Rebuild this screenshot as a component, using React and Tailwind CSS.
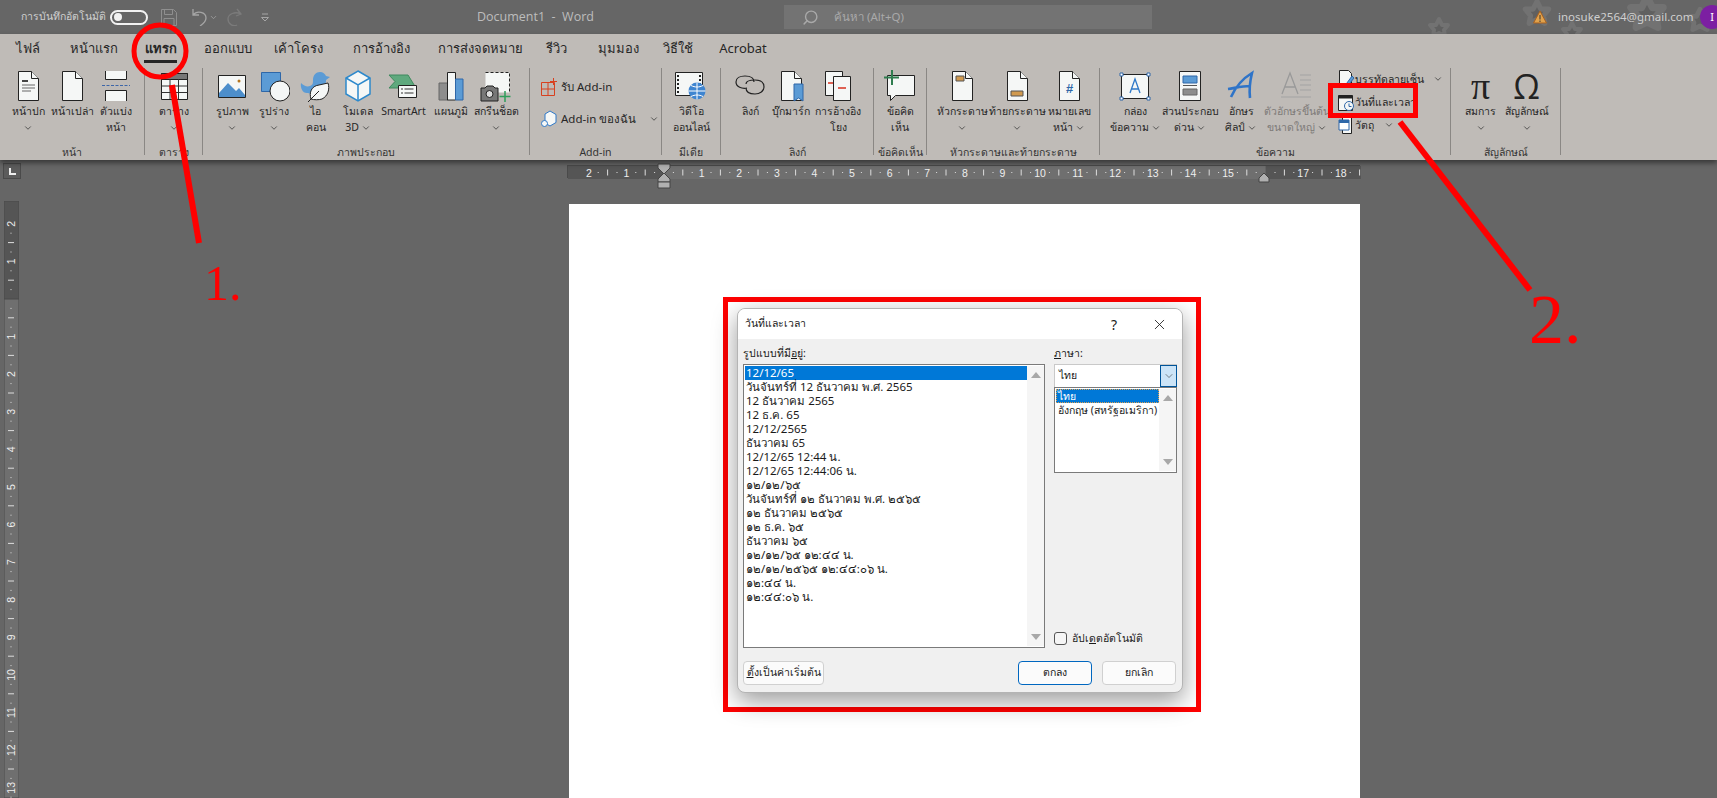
import React from 'react';
import { ChevronDown, Search, X } from 'lucide-react';

const Svg = ({ children, w = 32, h = 32, vb }) => (
  <svg width={w} height={h} viewBox={vb || `0 0 ${w} ${h}`} fill="none" className="shrink-0">
    {children}
  </svg>
);

const Sheet = ({ children }) => (
  <Svg>
    <path d="M6.500 1.500h13l7 7v22h-20z" fill="#f5f7f6" stroke="#222" />
    <path d="M19.500 1.500v7h7" fill="#f5f7f6" stroke="#222" />
    {children}
  </Svg>
);

const icons = {
  cover: (
    <Sheet>
      <path d="M10 10h6v2h-6z" fill="#444" />
      <path d="M10 15h13M10 18h13M10 21h9" stroke="#666" />
    </Sheet>
  ),
  blank: <Sheet />,
  pagebreak: (
    <Svg>
      <path d="M5.500 1v8.500h21V1M5.500 31v-10.500h21V31" fill="#f5f7f6" stroke="#222" />
      <path d="M2 15.500h28" stroke="#3d66a8" strokeDasharray="3 1.500" />
    </Svg>
  ),
  table: (
    <Svg>
      <path d="M3.500 3.500h26v26h-26z" fill="#f5f7f6" stroke="#222" />
      <path d="M3.500 3.500h26v6h-26z" fill="#777" stroke="#222" />
      <path d="M12 9v20M20.500 9v20M3.500 16h26M3.500 22.500h26" stroke="#333" />
    </Svg>
  ),
  picture: (
    <Svg>
      <path d="M2.500 5.500h27v22h-27z" fill="#f5f7f6" stroke="#222" />
      <path d="M3 27V23l9-10 8 8 3-3 6 7v2z" fill="#4d8ecb" />
      <circle cx="23" cy="11" r="1.500" fill="#b5751f" />
    </Svg>
  ),
  shape: (
    <Svg>
      <path d="M3.500 2.500h19v19h-19z" fill="#5b9bd5" stroke="#2e67a8" />
      <circle cx="22" cy="21" r="10" fill="#f5f7f6" stroke="#222" />
    </Svg>
  ),
  icon3: (
    <Svg>
      <path d="M1 13c3 3 6 4 9 3 3-1 3-3 3-6 0-5 3-8 7-8 3 0 5 2 6 4l4 1-4 3c0 4-1 8-5 11-4 3-9 4-13 2C3 24 0 18 1 13z" fill="#5b9bd5" />
      <path d="M11 29c-2-6 0-13 8-14l9-2c2 6 0 13-6 16-3 1-8 1-11 0z" fill="#f5f7f6" stroke="#222" />
      <path d="M8 32l11-11" stroke="#222" />
    </Svg>
  ),
  model: (
    <Svg>
      <path d="M16 1l12 7v16l-12 7-12-7V8z" fill="#f5f7f6" stroke="#2d89cc" strokeWidth="1.500" />
      <path d="M4 8l12 7 12-7M16 15v16" stroke="#2d89cc" strokeWidth="1.500" />
    </Svg>
  ),
  smartart: (
    <Svg w={34} h={32}>
      <path d="M2 5h19l8 13H2l6-6.500z" fill="#5fa97e" stroke="#3f8a5e" />
      <path d="M11.500 15.500h18v12h-18z" fill="#f5f7f6" stroke="#222" />
      <path d="M14 19h2M17.500 19h9M14 23h2M17.500 23h9" stroke="#333" />
    </Svg>
  ),
  chart: (
    <Svg>
      <path d="M4 13h9v17h-9z" fill="#8d8d8d" stroke="#666" />
      <path d="M12.500 2.500h8v27.500h-8z" fill="#f5f7f6" stroke="#222" />
      <path d="M20.500 9h7.500v21h-7.500z" fill="#5b9bd5" stroke="#2e67a8" />
    </Svg>
  ),
  screenshot: (
    <Svg>
      <path d="M5.500 2.500h24v20h-24z" fill="#f5f7f6" />
      <path d="M5.500 2.500h24v20" stroke="#222" strokeDasharray="3 2" />
      <path d="M1 18h4l2-2h6l2 2h3v13h-17z" fill="#777" stroke="#222" />
      <circle cx="9.500" cy="24" r="3.500" fill="#ddd" stroke="#222" />
      <path d="M25 21v11M19.500 26.500h11" stroke="#2f9e5b" strokeWidth="1.500" />
    </Svg>
  ),
  video: (
    <Svg w={34} h={32}>
      <path d="M1.500 2.500h27v23h-27z" fill="#f5f7f6" stroke="#222" />
      <path d="M4 5v18M26 5v18" stroke="#222" strokeWidth="2" strokeDasharray="2 2" />
      <circle cx="23" cy="21" r="8.500" fill="#3f85d0" />
      <path d="M23 12.500v17M14.500 21h17M17 15.500c4 2 8 2 12 0M17 26.500c4-2 8-2 12 0" stroke="#fff" />
    </Svg>
  ),
  link: (
    <Svg>
      <path d="M13 18c-5 1-11-1-11-6 0-4 4-6 9-6 6 0 9 2 9 6" stroke="#222" strokeWidth="1.200" />
      <path d="M12 14c0-3 4-4 9-4 6 0 9 3 9 7s-4 7-9 7c-6 0-9-2-9-6" stroke="#222" strokeWidth="1.200" />
    </Svg>
  ),
  bookmark: (
    <Sheet>
      <path d="M19 14h9v17l-4.500-3-4.500 3z" fill="#5b9bd5" stroke="#2e67a8" />
    </Sheet>
  ),
  crossref: (
    <Svg>
      <path d="M3.500 1.500h17v24h-17z" fill="#f5f7f6" stroke="#222" />
      <path d="M11.500 6.500h17v24h-17z" fill="#f5f7f6" stroke="#222" />
      <path d="M6 13h5M16 18h8" stroke="#d8321f" strokeWidth="1.300" />
    </Svg>
  ),
  comment: (
    <Svg>
      <path d="M3.500 5.500h27v20h-19l-5 5v-5h-3z" fill="#f5f7f6" stroke="#222" />
      <path d="M8 0v15M0 7.500h15" stroke="#2f7d4f" strokeWidth="2" />
    </Svg>
  ),
  header: (
    <Sheet>
      <path d="M10 6h8v5h-8z" fill="#d19a4f" stroke="#555" />
    </Sheet>
  ),
  footer: (
    <Sheet>
      <path d="M10 21h12v5h-12z" fill="#d19a4f" stroke="#555" />
    </Sheet>
  ),
  pagenum: (
    <Sheet>
      <text x="16.500" y="23" textAnchor="middle" fontSize="13" fontWeight="700" fill="#2e67a8" fontFamily="Liberation Sans">#</text>
    </Sheet>
  ),
  textbox: (
    <Svg>
      <path d="M2.500 4.500h27v24h-27z" fill="#f5f7f6" stroke="#222" />
      <path d="M1 3h3v3h-3zM28 3h3v3h-3zM1 27h3v3h-3zM28 27h3v3h-3z" fill="#fff" stroke="#2e67a8" />
      <path d="M11 23l5-14 5 14M12.500 19h7" stroke="#2e78c8" strokeWidth="1.300" />
    </Svg>
  ),
  quickparts: (
    <Svg>
      <path d="M5.500 1.500h21v29h-21z" fill="#f5f7f6" stroke="#222" />
      <path d="M9 6h14v7h-14z" fill="#5b9bd5" stroke="#2e67a8" />
      <path d="M9 15.500h14" stroke="#555" />
      <path d="M9 19h14v6h-14z" fill="#8d8d8d" stroke="#666" />
    </Svg>
  ),
  wordart: (
    <Svg>
      <path d="M3 19c7-1 14-3 22-3M6 27C10 18 17 9 27 3c-2 8-3 16-2 25" stroke="#2f74c8" strokeWidth="2.600" />
    </Svg>
  ),
  dropcap: (
    <Svg w={34} h={32}>
      <path d="M2 24l8-21 8 21M5 17h10" stroke="#999" strokeWidth="1.300" />
      <path d="M20 5h11M20 10h11M20 15h11M20 20h11M1 27h30" stroke="#a3a3a3" />
    </Svg>
  ),
};

const Chev = ({ className = '' }) => <ChevronDown size={10} strokeWidth={1.800} className={`inline-block text-[#333] ${className}`} />;

// one big ribbon button, icon on top and up to two lines of label
const Item = ({ w, icon, lines, chevron, muted }) => (
  <div className={`flex flex-col items-center shrink-0 ${w} ${muted ? 'text-[#7d7a78]' : 'text-[#262626]'}`}>
    <div className="h-[32px] mt-[2px] flex items-center justify-center">{icon}</div>
    <div className="leading-[16px] text-[10.5px] whitespace-nowrap text-center pt-[1px]">
      {lines.map((l, i) => (
        <div key={i} className="h-[16px]">
          {l}
          {chevron === 'inline' && i === lines.length - 1 && <Chev className="ml-[2px]" />}
        </div>
      ))}
      {chevron === 'below' && (
        <div className="h-[16px]">
          <Chev />
        </div>
      )}
    </div>
  </div>
);

const Group = ({ w, label, children, className = '' }) => (
  <div className={`shrink-0 h-[87px] border-r border-[#8a8784] flex flex-col ${w}`}>
    <div className={`flex flex-1 min-h-0 ${className}`}>{children}</div>
    <div className="h-[10px] text-center text-[10.5px] leading-[15px] text-[#333] whitespace-nowrap">{label}</div>
  </div>
);

const tabs = [
  ['ไฟล์', 'w-[55px]'],
  ['หน้าแรก', 'w-[78px]'],
  ['แทรก', 'w-[55px]'],
  ['ออกแบบ', 'w-[80px]'],
  ['เค้าโครง', 'w-[60px]'],
  ['การอ้างอิง', 'w-[106px]'],
  ['การส่งจดหมาย', 'w-[92px]'],
  ['รีวิว', 'w-[60px]'],
  ['มุมมอง', 'w-[64px]'],
  ['วิธีใช้', 'w-[56px]'],
  ['Acrobat', 'w-[74px]'],
];

const Ribbon = () => (
  <div className="h-[126px] bg-[#bfbbb7] shadow-[0_3px_5px_rgba(0,0,0,0.45)] relative z-10">
    <div className="h-[34px] flex items-center pb-[4px] text-[13px] text-[#262626]">
      {tabs.map(([t, w]) => (
        <div key={t} className={`${w} shrink-0 text-center whitespace-nowrap relative ${t === 'แทรก' ? 'font-bold' : ''}`}>
          {t}
          {t === 'แทรก' && <div className="absolute left-[11px] right-[11px] top-[21px] h-[3px] bg-[#262626]" />}
        </div>
      ))}
    </div>
    <div className="flex h-[87px]">
      <Group w="w-[145px]" label="หน้า" className="pl-[6px]">
        <Item w="w-[44px]" icon={icons.cover} lines={['หน้าปก']} chevron="below" />
        <Item w="w-[44px]" icon={icons.blank} lines={['หน้าเปล่า']} />
        <Item w="w-[44px]" icon={icons.pagebreak} lines={['ตัวแบ่ง', 'หน้า']} />
      </Group>
      <Group w="w-[58px]" label="ตาราง" className="justify-center">
        <Item w="w-[50px]" icon={icons.table} lines={['ตาราง']} chevron="below" />
      </Group>
      <Group w="w-[327px]" label="ภาพประกอบ" className="pl-[8px]">
        <Item w="w-[42px]" icon={icons.picture} lines={['รูปภาพ']} chevron="below" />
        <Item w="w-[41px]" icon={icons.shape} lines={['รูปร่าง']} chevron="below" />
        <Item w="w-[43px]" icon={icons.icon3} lines={['ไอ', 'คอน']} />
        <Item w="w-[42px]" icon={icons.model} lines={['โมเดล', '3D']} chevron="inline" />
        <Item w="w-[49px]" icon={icons.smartart} lines={['SmartArt']} />
        <Item w="w-[46px]" icon={icons.chart} lines={['แผนภูมิ']} />
        <Item w="w-[44px]" icon={icons.screenshot} lines={['สกรีนช็อต']} chevron="below" />
      </Group>
      <Group w="w-[132px]" label="Add-in" className="flex-col pl-[11px] text-[11.5px] text-[#262626] whitespace-nowrap">
        <div className="h-[32px] mt-[3px] flex items-center gap-[4px]">
          <Svg w={16} h={18}>
            <path d="M.5 4.500h13v13h-13zM7 4.500v13M.5 11h13" stroke="#d8401f" />
            <path d="M12.500 0v7M9 3.500h7" stroke="#d8401f" />
          </Svg>
          รับ Add-in
        </div>
        <div className="h-[32px] flex items-center gap-[4px]">
          <Svg w={16} h={18}>
            <path d="M9 1l6 3.500v8l-6 3.500-5-3v-9z" fill="#f5f7f6" stroke="#2e78c8" />
            <circle cx="3.500" cy="13.500" r="3" fill="#f5f7f6" stroke="#2e78c8" />
          </Svg>
          Add-in ของฉัน
          <Chev className="ml-[9px]" />
        </div>
      </Group>
      <Group w="w-[59px]" label="มีเดีย" className="justify-center">
        <Item w="w-[50px]" icon={icons.video} lines={['วิดีโอ', 'ออนไลน์']} />
      </Group>
      <Group w="w-[153px]" label="ลิงก์" className="pl-[8px]">
        <Item w="w-[42px]" icon={icons.link} lines={['ลิงก์']} />
        <Item w="w-[40px]" icon={icons.bookmark} lines={['บุ๊กมาร์ก']} />
        <Item w="w-[54px]" icon={icons.crossref} lines={['การอ้างอิง', 'โยง']} />
      </Group>
      <Group w="w-[53px]" label="ข้อคิดเห็น" className="justify-center">
        <Item w="w-[44px]" icon={icons.comment} lines={['ข้อคิด', 'เห็น']} />
      </Group>
      <Group w="w-[173px]" label="หัวกระดาษและท้ายกระดาษ" className="pl-[7px]">
        <Item w="w-[56px]" icon={icons.header} lines={['หัวกระดาษ']} chevron="below" />
        <Item w="w-[54px]" icon={icons.footer} lines={['ท้ายกระดาษ']} chevron="below" />
        <Item w="w-[50px]" icon={icons.pagenum} lines={['หมายเลข', 'หน้า']} chevron="inline" />
      </Group>
      <Group w="w-[351px]" label="ข้อความ" className="pl-[8px]">
        <Item w="w-[54px]" icon={icons.textbox} lines={['กล่อง', 'ข้อความ']} chevron="inline" />
        <Item w="w-[56px]" icon={icons.quickparts} lines={['ส่วนประกอบ', 'ด่วน']} chevron="inline" />
        <Item w="w-[46px]" icon={icons.wordart} lines={['อักษร', 'ศิลป์']} chevron="inline" />
        <Item w="w-[66px]" muted icon={icons.dropcap} lines={['ตัวอักษรขึ้นต้น', 'ขนาดใหญ่']} chevron="inline" />
        <div className="ml-[8px] flex flex-col text-[10.5px] leading-[16px] text-[#262626] whitespace-nowrap">
          <div className="h-[22px] flex items-center">
            <Svg w={17} h={18}>
              <path d="M1.500.5h9l3 3v14h-12z" fill="#f5f7f6" stroke="#222" />
              <path d="M6 17l8-11 2 2-8 10z" fill="#5b9bd5" stroke="#2e67a8" />
            </Svg>
            บรรทัดลายเซ็น
            <Chev className="ml-[9px]" />
          </div>
          <div className="h-[23px] flex items-center">
            <Svg w={17} h={18}>
              <path d="M.5 2.500h14v15h-14z" fill="#f5f7f6" stroke="#222" />
              <path d="M.5 2.500h14v3h-14z" fill="#222" />
              <circle cx="11" cy="13" r="4.500" fill="#f5f7f6" stroke="#2e67a8" />
              <path d="M11 10.500v3h2.500" stroke="#2e67a8" />
            </Svg>
            วันที่และเวลา
          </div>
          <div className="h-[23px] flex items-center">
            <Svg w={17} h={18}>
              <path d="M4.500.5h9v17h-9z" fill="#f5f7f6" stroke="#222" />
              <path d="M1 4h10v10h-10z" fill="#fff" stroke="#2e67a8" />
              <path d="M1 4h10v3h-10z" fill="#2e67a8" />
            </Svg>
            วัตถุ
            <Chev className="ml-[10px]" />
          </div>
        </div>
      </Group>
      <Group w="w-[110px]" label="สัญลักษณ์" className="pl-[7px]">
        <Item
          w="w-[45px]"
          icon={
            <span className="text-[38px] leading-[32px] font-['Liberation_Serif',serif] text-[#222]">π</span>
          }
          lines={['สมการ']}
          chevron="below"
        />
        <Item
          w="w-[47px]"
          icon={
            <span className="text-[34px] leading-[32px] font-['Open_Sans',sans-serif] text-[#222]">Ω</span>
          }
          lines={['สัญลักษณ์']}
          chevron="below"
        />
      </Group>
    </div>
  </div>
);

// faint office theme stars behind the account name
const starPath = 'M0 -9L3 -3L9 -3L5 2L6 8L0 5L-6 8L-5 2L-9 -3L-3 -3Z';

const TitleBar = () => (
  <div className="h-[34px] bg-[#666666] flex items-center text-[#d0d0d0] relative overflow-hidden">
    <svg width="337" height="34" viewBox="0 0 337 34" fill="none" className="absolute right-0 top-0">
      {[[59, 28, 1], [157, 13, 1.300], [192, 32, 1], [267, 13, 1.800], [320, 20, 1.200]].map(([x, y, s]) => (
        <path key={x} d={starPath} transform={`translate(${x} ${y}) scale(${s})`} fill="#606060" stroke="#727272" strokeWidth="4" strokeLinejoin="round" />
      ))}
    </svg>
    <div className="w-[110px] shrink-0 pl-[21px] text-[10.5px] whitespace-nowrap">การบันทึกอัตโนมัติ</div>
    <div className="w-[38px] h-[15px] shrink-0 rounded-full border-2 border-[#f2f2f2] flex items-center pl-[2px]">
      <div className="w-[8px] h-[8px] rounded-full bg-[#f2f2f2]" />
    </div>
    <div className="ml-[13px] shrink-0">
      <Svg w={16} h={18}>
        <path d="M.5 1.500h12l3 3v13h-15z M3.500 1.500v5h8v-5M3 17.500v-7h10v7" stroke="#8f8f8f" />
      </Svg>
    </div>
    <div className="ml-[13px] flex items-center shrink-0">
      <Svg w={18} h={18}>
        <path d="M3 1v6h6M3 7c4-5 13-3 13 3 0 4-3 6-6 8" stroke="#a5a5a5" strokeWidth="1.300" />
      </Svg>
      <ChevronDown size={9} className="text-[#a5a5a5] ml-[1px]" />
    </div>
    <div className="ml-[8px] shrink-0">
      <Svg w={18} h={18}>
        <path d="M11 1l4 5-5 2M15 6c-6-3-13 0-13 5 0 5 5 8 9 6" stroke="#7b7b7b" strokeWidth="1.300" />
      </Svg>
    </div>
    <div className="ml-[16px] shrink-0">
      <Svg w={10} h={12}>
        <path d="M2 3h6M1.500 6.500h7l-3.500 3.500z" stroke="#a5a5a5" />
      </Svg>
    </div>
    <div className="ml-[207px] w-[130px] shrink-0 text-[12.5px] text-[#bdbdbd] whitespace-pre font-['Open_Sans',sans-serif]">Document1  -  Word</div>
    <div className="ml-[177px] w-[368px] h-[24px] shrink-0 bg-[#737373] flex items-center pl-[18px] text-[11.5px] text-[#a9a9a9]">
      <Search size={17} className="-scale-x-100 text-[#a9a9a9] mr-[15px]" />
      ค้นหา (Alt+Q)
    </div>
    <div className="ml-[381px] flex items-center relative shrink-0">
      <Svg w={14} h={14}>
        <path d="M7 1l6.500 12H.5z" fill="#e0a24d" stroke="#a8601f" />
        <path d="M7 5v4.500M7 10.500v1.500" stroke="#333" />
      </Svg>
      <span className="ml-[11px] w-[131px] text-[11.5px] text-[#cfcfcf] whitespace-nowrap">inosuke2564@gmail.com</span>
      <div className="ml-[11px] w-[24px] h-[24px] shrink-0 bg-[#7c1fa2] rounded-full text-[11px] text-white flex items-center justify-center">I</div>
    </div>
  </div>
);

// ruler is a drawing, ticks and numbers are generated per centimetre
const HRuler = () => {
  const cm = 37.6;
  const zero = 96;
  const marks = [];
  for (let i = -2; i <= 18; i++) {
    const x = zero + i * cm;
    if (i !== 0 && i !== 16) marks.push(<text key={`n${i}`} x={x} y="10.500" textAnchor="middle" fontSize="10.500" fill="#eee" fontFamily="Liberation Sans">{Math.abs(i)}</text>);
    marks.push(<path key={`h${i}`} d={`M${x + cm / 2} 3.500v6`} stroke="#ddd" />);
    marks.push(<path key={`a${i}`} d={`M${x + cm / 4} 6v1M${x + (3 * cm) / 4} 6v1`} stroke="#ddd" />);
  }
  return (
    <div className="relative w-[793px] h-[13px] border border-[#4a4a4a]">
      <svg width="793" height="13" viewBox="0 0 793 13" className="block">
        <rect width="793" height="13" fill="#555" />
        <rect x="96" width="601.600" height="13" fill="#6f6f6f" />
        {marks}
      </svg>
      <svg width="14" height="26" viewBox="0 0 14 26" className="absolute left-[89px] -top-[3px]">
        <path d="M1 1h12v4l-6 6-6-6z" fill="#b0b0b0" stroke="#444" />
        <path d="M7 10l6 6v3h-12v-3z" fill="#b0b0b0" stroke="#444" />
        <path d="M1 19h12v6h-12z" fill="#b0b0b0" stroke="#444" />
      </svg>
      <svg width="12" height="10" viewBox="0 0 12 10" className="absolute left-[690px] top-[7px]">
        <path d="M6 0l5 5v4h-10v-4z" fill="#b0b0b0" stroke="#444" />
      </svg>
    </div>
  );
};

const VRuler = () => {
  const cm = 37.6;
  const zero = 98;
  const marks = [];
  for (let i = -2; i <= 13; i++) {
    const y = zero + i * cm;
    if (i !== 0) marks.push(<text key={`n${i}`} x="0" y="0" transform={`translate(11 ${y}) rotate(-90)`} textAnchor="middle" fontSize="10.500" fill="#eee" fontFamily="Liberation Sans">{Math.abs(i)}</text>);
    marks.push(<path key={`h${i}`} d={`M4 ${y + cm / 2}h6`} stroke="#ddd" />);
    marks.push(<path key={`a${i}`} d={`M6.500 ${y + cm / 4}h1M6.500 ${y + (3 * cm) / 4}h1`} stroke="#ddd" />);
  }
  return (
    <svg width="15" height="597" viewBox="0 0 15 597" className="block ml-[1px] mt-[22px]">
      <rect width="15" height="597" fill="#6f6f6f" stroke="#4a4a4a" />
      <rect width="15" height="98" fill="#555" stroke="#4a4a4a" />
      {marks}
    </svg>
  );
};

const formats = [
  '12/12/65',
  'วันจันทร์ที่ 12 ธันวาคม พ.ศ. 2565',
  '12 ธันวาคม 2565',
  '12 ธ.ค. 65',
  '12/12/2565',
  'ธันวาคม 65',
  '12/12/65 12:44 น.',
  '12/12/65 12:44:06 น.',
  '๑๒/๑๒/๖๕',
  'วันจันทร์ที่ ๑๒ ธันวาคม พ.ศ. ๒๕๖๕',
  '๑๒ ธันวาคม ๒๕๖๕',
  '๑๒ ธ.ค. ๖๕',
  'ธันวาคม ๖๕',
  '๑๒/๑๒/๖๕ ๑๒:๔๔ น.',
  '๑๒/๑๒/๒๕๖๕ ๑๒:๔๔:๐๖ น.',
  '๑๒:๔๔ น.',
  '๑๒:๔๔:๐๖ น.',
];

const ScrollBar = () => (
  <div className="w-[17px] bg-[#f5f5f5] flex flex-col justify-between items-center py-[6px] shrink-0">
    <div className="w-0 h-0 border-x-[5px] border-x-transparent border-b-[6px] border-b-[#a8a8a8]" />
    <div className="w-0 h-0 border-x-[5px] border-x-transparent border-t-[6px] border-t-[#a8a8a8]" />
  </div>
);

const DateDialog = () => (
  <div className="w-[478px] h-[415px] border-[5px] border-[#ff0000] ml-[154px] mt-[93px] pl-[9px] pt-[6px]">
    <div className="w-[446px] h-[385px] rounded-[8px] overflow-hidden border border-[#b4b4b4] shadow-[0_8px_24px_rgba(0,0,0,0.4)] bg-[#f0f0f0] text-[10.5px] text-[#1a1a1a]">
      <div className="h-[30px] bg-white flex items-center pl-[7px] text-[10.5px]">
        <span>วันที่และเวลา</span>
        <span className="ml-auto text-[14px] mr-[34px]">?</span>
        <X size={17} strokeWidth={1.200} className="mr-[14px]" />
      </div>
      <div className="px-[5px]">
        <div className="flex">
          <div className="w-[302px]">
            <div className="h-[25px] flex items-end pb-[2px]">
              <span>รูปแบบที่มี<u>อ</u>ยู่:</span>
            </div>
            <div className="h-[284px] border border-[#7a7a7a] bg-white flex p-[1px] pr-0">
              <div className="flex-1 min-w-0 leading-[14px] text-[11.5px]">
                {formats.map((f, i) => (
                  <div key={f} className={`h-[14px] pl-[1px] whitespace-nowrap ${i === 0 ? 'bg-[#0078d7] text-white' : ''}`}>{f}</div>
                ))}
              </div>
              <ScrollBar />
            </div>
          </div>
          <div className="w-[123px] ml-[9px] flex flex-col">
            <div className="h-[25px] flex items-end pb-[2px]">
              <span><u>ภ</u>าษา:</span>
            </div>
            <div className="h-[23px] bg-white flex items-center pl-[4px] border-t border-l border-[#c9c9c9]">
              <span>ไทย</span>
              <div className="ml-auto w-[17px] h-[22px] bg-[#cce4f7] border border-[#005499] flex items-center justify-center">
                <ChevronDown size={12} strokeWidth={1} />
              </div>
            </div>
            <div className="h-[86px] border border-[#7a7a7a] bg-white flex p-[1px] pr-0 leading-[14px]">
              <div className="flex-1 min-w-0">
                <div className="h-[14px] bg-[#0078d7] text-white pl-[2px] outline-dotted outline-1 -outline-offset-1 outline-[#e0a050]">ไทย</div>
                <div className="h-[14px] pl-[2px] whitespace-nowrap">อังกฤษ (สหรัฐอเมริกา)</div>
              </div>
              <ScrollBar />
            </div>
            <div className="mt-[159px] flex items-center h-[13px]">
              <div className="w-[13px] h-[13px] rounded-[3px] border border-[#555] bg-[#f5f5f5]" />
              <span className="ml-[5px] whitespace-nowrap">อัปเ<u>ด</u>ตอัตโนมัติ</span>
            </div>
          </div>
        </div>
        <div className="flex mt-[13px]">
          <button className="w-[81px] h-[24px] bg-[#fbfbfb] border border-[#d0d0d0] rounded-[4px] text-[10.5px] whitespace-nowrap"><u>ตั้</u>งเป็นค่าเริ่มต้น</button>
          <button className="w-[74px] h-[24px] ml-auto bg-[#fbfbfb] border border-[#0067c0] rounded-[4px] text-[10.5px]">ตกลง</button>
          <button className="w-[74px] h-[24px] ml-[10px] mr-[1px] bg-[#fbfbfb] border border-[#d0d0d0] rounded-[4px] text-[10.5px]">ยกเลิก</button>
        </div>
      </div>
    </div>
  </div>
);

export default function App() {
  return (
    <div className="relative h-[798px] w-[1717px] overflow-hidden bg-[#666666] flex flex-col font-['Noto_Sans','Open_Sans',sans-serif]">
      <TitleBar />
      <Ribbon />
      <div className="flex flex-1 min-h-0">
        <div className="w-[26px] shrink-0 pl-[3px] pt-[3px]">
          <div className="w-[18px] h-[16px] border border-[#4a4a4a] bg-[#5c5c5c] flex items-center justify-center">
            <div className="w-[7px] h-[7px] border-l-2 border-b-2 border-[#eee]" />
          </div>
          <VRuler />
        </div>
        <div className="pl-[541px] pt-[5px] flex flex-col">
          <HRuler />
          <div className="ml-[2px] mt-[26px] w-[791px] flex-1 bg-white">
            <DateDialog />
          </div>
        </div>
      </div>

      {/* hand drawn red markup on top of the screenshot */}
      <svg width="1717" height="798" viewBox="0 0 1717 798" fill="none" className="absolute inset-0 pointer-events-none z-20">
        <ellipse cx="160" cy="51" rx="26" ry="26" stroke="#ff0000" strokeWidth="5" />
        <path d="M172 85L199 243" stroke="#ff0000" strokeWidth="6" />
        <path d="M1400 122L1530 290" stroke="#ff0000" strokeWidth="6" />
        <rect x="1330.500" y="85.500" width="85" height="30" stroke="#ff0000" strokeWidth="5" />
        <text x="204" y="300" fontSize="50" fill="#ff0000" fontFamily="Liberation Serif">1.</text>
        <text x="1529" y="343" fontSize="70" fill="#ff0000" fontFamily="Liberation Serif">2.</text>
      </svg>
    </div>
  );
}
